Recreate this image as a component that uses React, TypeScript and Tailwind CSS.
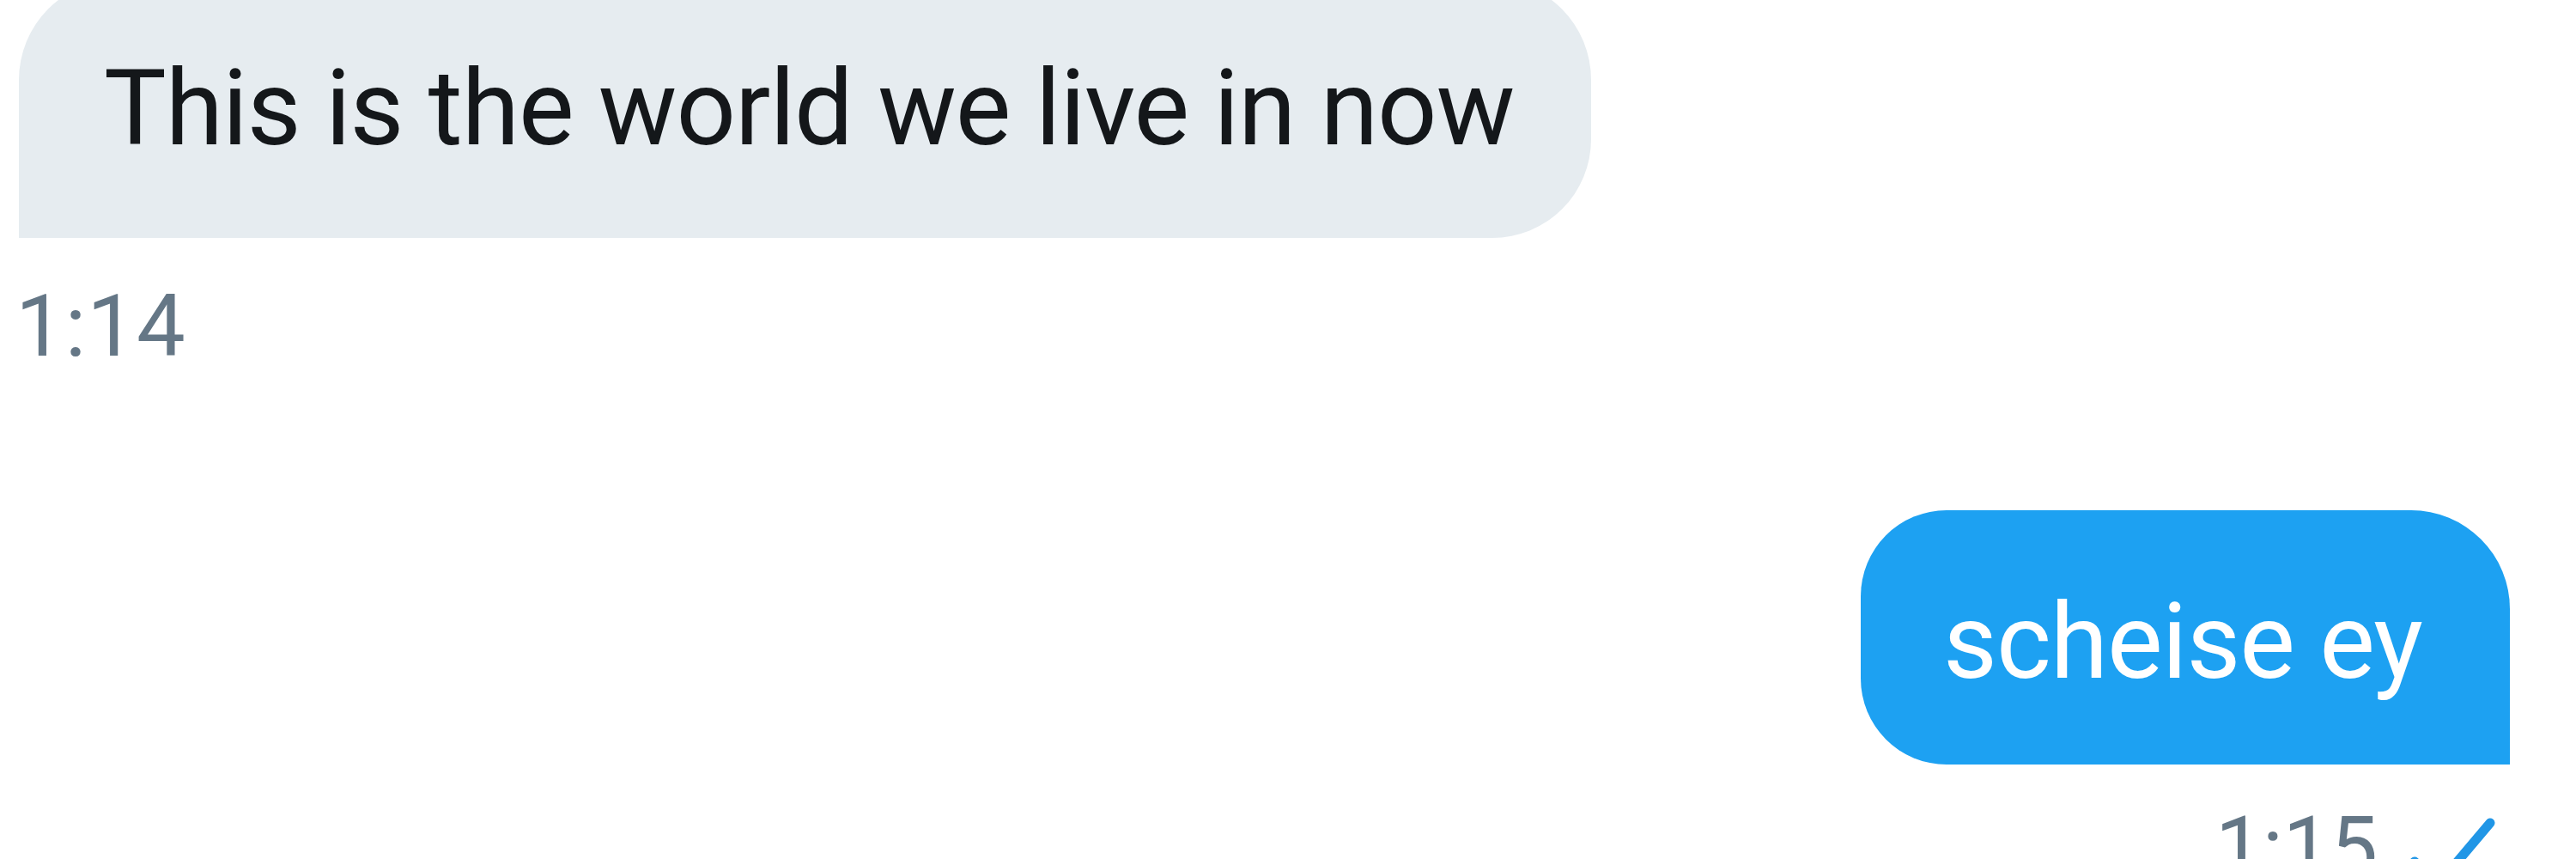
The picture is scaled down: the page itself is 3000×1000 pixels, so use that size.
export default function App() {
  return (
    <div className="w-[3000px] h-[1000px] overflow-hidden bg-white flex flex-col font-['Roboto',sans-serif]">
      {/* incoming */}
      <div className="flex flex-col items-start pl-[22px] -mt-[24px]">
        <div className="w-[1831px] h-[301px] bg-[#e6ecf0] rounded-tl-[117px] rounded-tr-[117px] rounded-br-[115px] flex items-center pl-[99px]">
          <span className="text-[122px] leading-none text-[#14171a] tracking-[-1px]">This is the world we live in now</span>
        </div>
        <div className="mt-[52px] -ml-[4px] text-[101px] leading-none text-[#657786] tracking-[1px]">1:14</div>
      </div>

      {/* outgoing */}
      <div className="flex flex-col items-end pr-[77px] mt-[164px]">
        <div className="w-[756px] h-[296px] bg-[#1da1f2] rounded-tl-[100px] rounded-tr-[115px] rounded-bl-[100px] flex items-center pl-[96px] pt-[12px]">
          <span className="text-[122px] leading-none text-white tracking-[-1px]">scheise ey</span>
        </div>
        <div className="mt-[48px] pr-[13px] flex items-start gap-[41px]">
          <span className="text-[98px] leading-none text-[#657786]">1:15</span>
          <svg width="100" height="80" viewBox="0 0 100 80" className="mt-[13px] overflow-visible">
            <path d="M2 52 L30 78 L90 7" fill="none" stroke="#2196e6" strokeWidth="11" strokeLinecap="round" strokeLinejoin="round" />
          </svg>
        </div>
      </div>
    </div>
  )
}
